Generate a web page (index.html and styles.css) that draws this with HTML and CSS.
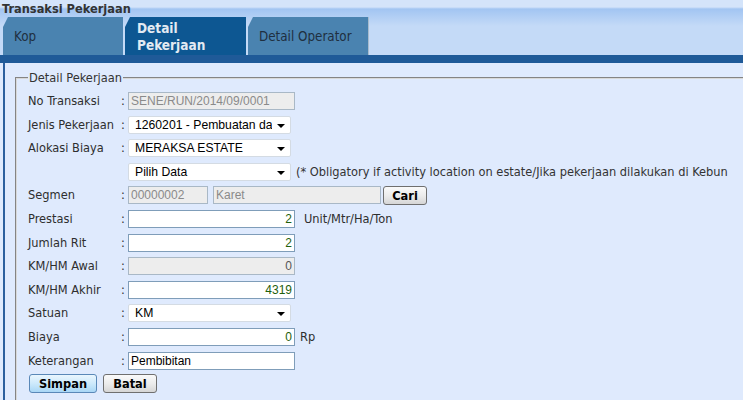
FILE: index.html
```html
<!DOCTYPE html>
<html>
<head>
<meta charset="utf-8">
<title>Transaksi Pekerjaan</title>
<link rel="stylesheet" href="styles.css">
</head>
<body>
<div class="header">
  <div class="title">Transaksi Pekerjaan</div>
  <div class="tabs">
    <div class="tab">Kop</div>
    <div class="tab active">Detail<br>Pekerjaan</div>
    <div class="tab last">Detail Operator</div>
  </div>
</div>
<div class="tabline"></div>
<div class="frame">
  <fieldset class="group">
    <legend>Detail Pekerjaan</legend>
    <div class="form">
      <div class="lbl">No Transaksi</div><div class="col">:</div>
      <div class="fld"><input class="inp dis" value="SENE/RUN/2014/09/0001" disabled></div>

      <div class="lbl">Jenis Pekerjaan</div><div class="col">:</div>
      <div class="fld"><span class="sel"><select><option>1260201 - Pembuatan dan Pemeliharaan</option></select></span></div>

      <div class="lbl">Alokasi Biaya</div><div class="col">:</div>
      <div class="fld"><span class="sel"><select><option>MERAKSA ESTATE</option></select></span></div>

      <div class="lbl"></div><div class="col"></div>
      <div class="fld"><span class="sel"><select><option>Pilih Data</option></select></span><span class="note">(* Obligatory if activity location on estate/Jika pekerjaan dilakukan di Kebun</span></div>

      <div class="lbl">Segmen</div><div class="col">:</div>
      <div class="fld"><input class="inp dis short" value="00000002" disabled><input class="inp dis mid" value="Karet" disabled><button class="btn gray cari">Cari</button></div>

      <div class="lbl">Prestasi</div><div class="col">:</div>
      <div class="fld"><input class="inp num" value="2"><span class="unit">Unit/Mtr/Ha/Ton</span></div>

      <div class="lbl">Jumlah Rit</div><div class="col">:</div>
      <div class="fld"><input class="inp num" value="2"></div>

      <div class="lbl">KM/HM Awal</div><div class="col">:</div>
      <div class="fld"><input class="inp num dis" value="0" disabled></div>

      <div class="lbl">KM/HM Akhir</div><div class="col">:</div>
      <div class="fld"><input class="inp num" value="4319"></div>

      <div class="lbl">Satuan</div><div class="col">:</div>
      <div class="fld"><span class="sel"><select><option>KM</option></select></span></div>

      <div class="lbl">Biaya</div><div class="col">:</div>
      <div class="fld"><input class="inp num" value="0"><span class="rp">Rp</span></div>

      <div class="lbl">Keterangan</div><div class="col">:</div>
      <div class="fld"><input class="inp" value="Pembibitan"></div>
    </div>
    <div class="actions">
      <button class="btn blue simpan">Simpan</button>
      <button class="btn gray batal">Batal</button>
    </div>
  </fieldset>
</div>
</body>
</html>
```
FILE: styles.css
```css
html, body {
  margin: 0;
  padding: 0;
  overflow: hidden;
  height: 400px;
  background: #dfeafd;
  font-family: "DejaVu Sans Condensed", "DejaVu Sans", sans-serif;
  font-size: 12.7px;
  color: #2e2e2e;
}

.header {
  height: 55px;
  background: linear-gradient(to bottom, #d4e4fa 0px, #d4e4fa 7px, #a2c5f2 9px, #c4daf7 26px, #c4daf7 100%);
  display: flex;
  flex-direction: column;
}

.title {
  height: 17px;
  line-height: 18px;
  padding-left: 2px;
  font-weight: bold;
  font-size: 12.7px;
  color: #333;
}

.tabs {
  display: flex;
  height: 38px;
  padding-left: 3px;
  gap: 2px;
}

.tab {
  width: 120px;
  height: 38px;
  background: #4a83b0;
  clip-path: polygon(0 10px, 5px 0, 100% 0, 100% 100%, 0 100%);
  color: #1f2f40;
  font-size: 13.3px;
  display: flex;
  align-items: center;
  padding-left: 11px;
  box-sizing: border-box;
}

.tab.active {
  width: 121px;
  background: #0d5792;
  color: #e3eaf2;
  font-weight: bold;
  font-size: 13.5px;
  line-height: 17px;
  padding-left: 12px;
  padding-top: 1px;
}

.tab.last {
  width: 121px;
  border-right: 1px solid #a9bccd;
}

.tabline {
  height: 8px;
  background: #1f5a98;
}

.frame {
  margin-left: 3px;
  border-left: 2px solid #2b5f9e;
  height: 337px;
  padding-left: 10px;
  padding-top: 7px;
  box-sizing: border-box;
  overflow: hidden;
}

.group {
  margin: 0;
  width: calc(100% + 10px);
  border: 2px groove #d8d8d8;
  border-right: none;
  padding: 7px 0 0 11px;
  height: 340px;
  box-sizing: border-box;
}

.group legend {
  padding: 0 1px;
  margin-left: 0;
  color: #333;
  font-size: 12.7px;
}

.form {
  display: grid;
  grid-template-columns: 92px 8px auto;
  grid-auto-rows: 18px;
  row-gap: 5.6px;
  align-items: center;
}

.lbl, .col {
  line-height: 18px;
  white-space: nowrap;
}

.col {
  padding-left: 1px;
}

.fld {
  display: flex;
  align-items: center;
  height: 18px;
}

.inp {
  box-sizing: border-box;
  width: 167px;
  height: 18px;
  border: 1px solid #7f9db9;
  background: #fff;
  font-family: "Liberation Sans", Arial, sans-serif;
  font-size: 12px;
  color: #000;
  padding: 0 2px 0 2px;
  margin: 0;
  outline: none;
}

.inp.dis {
  background: #ededed;
  border-color: #a9b8c6;
  color: #8a8a8a;
}

.inp.num {
  text-align: right;
  color: #1f5f0c;
}

.inp.num.dis {
  color: #555;
}

.inp.short {
  width: 80px;
}

.inp.mid {
  width: 168px;
  margin-left: 5px;
}

.sel {
  position: relative;
  display: inline-block;
  width: 163px;
  height: 18px;
}

.sel select {
  appearance: none;
  -webkit-appearance: none;
  width: 163px;
  height: 18px;
  box-sizing: border-box;
  border: 1px solid #d4dbe3;
  border-radius: 2px;
  background: #fff;
  font-family: "Liberation Sans", Arial, sans-serif;
  font-size: 12.2px;
  color: #000;
  padding: 0 18px 0 6px;
  margin: 0;
  outline: none;
  overflow: hidden;
  text-overflow: clip;
  white-space: nowrap;
}

.sel::after {
  content: "";
  position: absolute;
  right: 6px;
  top: 8px;
  border-left: 4px solid transparent;
  border-right: 4px solid transparent;
  border-top: 4px solid #000;
}

.note {
  margin-left: 5px;
  white-space: nowrap;
  color: #333;
}

.unit {
  margin-left: 9px;
}

.rp {
  margin-left: 5px;
}

.btn {
  font-family: "DejaVu Sans Condensed", "DejaVu Sans", sans-serif;
  font-weight: bold;
  font-size: 12.7px;
  color: #000;
  height: 19px;
  line-height: 17px;
  border-radius: 3px;
  padding: 0;
  margin: 0;
  box-sizing: border-box;
  cursor: default;
}

.btn.gray {
  border: 1px solid #6f6f6f;
  background: linear-gradient(to bottom, #fafafa 0%, #ececec 50%, #d6d6d6 100%);
}

.btn.blue {
  border: 1px solid #5a88b8;
  background: linear-gradient(to bottom, #eaf6fe 0%, #cde9fb 50%, #a9d7f6 100%);
}

.cari {
  width: 44px;
  margin-left: 2px;
}

.actions {
  display: flex;
  margin-top: 4.6px;
  padding-left: 1px;
  gap: 6px;
}

.simpan {
  width: 68px;
}

.batal {
  width: 54px;
}
```
